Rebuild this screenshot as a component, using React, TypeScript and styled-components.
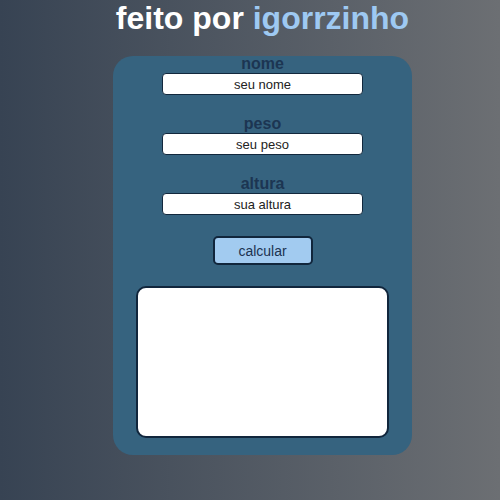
import React from "react";
import styled, { createGlobalStyle } from "styled-components";

const Global = createGlobalStyle`
  html, body {
    margin: 0;
    padding: 0;
    height: 100%;
  }
  body {
    background: linear-gradient(to right, #374353, #6c6f73);
    font-family: "Liberation Sans", Arial, sans-serif;
  }
`;

const Page = styled.main`
  min-height: 500px;
  padding-left: 25px;
  display: flex;
  flex-direction: column;
  align-items: center;
`;

const Title = styled.h1`
  margin: 0 0 19px;
  font-size: 32px;
  font-weight: bold;
  color: #ffffff;
  line-height: 37px;
`;

const Highlight = styled.span`
  color: #9ec9f2;
`;

const Card = styled.section`
  width: 299px;
  box-sizing: border-box;
  background: #36637f;
  border-radius: 20px;
  padding: 0 23px 17px;
  display: flex;
  flex-direction: column;
  align-items: center;
`;

const Field = styled.div`
  display: flex;
  flex-direction: column;
  align-items: center;
  gap: 1px;
  margin-bottom: 21px;
  &:last-of-type {
    margin-bottom: 20px;
  }
`;

const Label = styled.label`
  font-size: 16px;
  line-height: 16px;
  font-weight: bold;
  color: #1c3552;
`;

const Input = styled.input`
  width: 201px;
  height: 22px;
  box-sizing: border-box;
  border: 1px solid #12283d;
  border-radius: 4px;
  background: #ffffff;
  text-align: center;
  font-family: "Liberation Sans", Arial, sans-serif;
  font-size: 13px;
  color: #222;
  padding: 0;
  &::placeholder {
    color: #222;
  }
`;

const Button = styled.button`
  width: 100px;
  height: 29px;
  box-sizing: border-box;
  background: #a2cbf0;
  border: 2px solid #11263c;
  border-radius: 5px;
  font-family: "Liberation Sans", Arial, sans-serif;
  font-size: 14px;
  color: #1c3350;
  cursor: pointer;
  margin-bottom: 21px;
  padding: 0;
`;

const Result = styled.div`
  width: 253px;
  height: 152px;
  box-sizing: border-box;
  background: #ffffff;
  border: 2px solid #11263c;
  border-radius: 10px;
`;

const fields = [
  { id: "nome", label: "nome", placeholder: "seu nome" },
  { id: "peso", label: "peso", placeholder: "seu peso" },
  { id: "altura", label: "altura", placeholder: "sua altura" },
];

export default function App() {
  return (
    <>
      <Global />
      <Page>
        <Title>
          feito por <Highlight>igorrzinho</Highlight>
        </Title>
        <Card>
          {fields.map((f) => (
            <Field key={f.id}>
              <Label htmlFor={f.id}>{f.label}</Label>
              <Input id={f.id} placeholder={f.placeholder} />
            </Field>
          ))}
          <Button>calcular</Button>
          <Result />
        </Card>
      </Page>
    </>
  );
}
